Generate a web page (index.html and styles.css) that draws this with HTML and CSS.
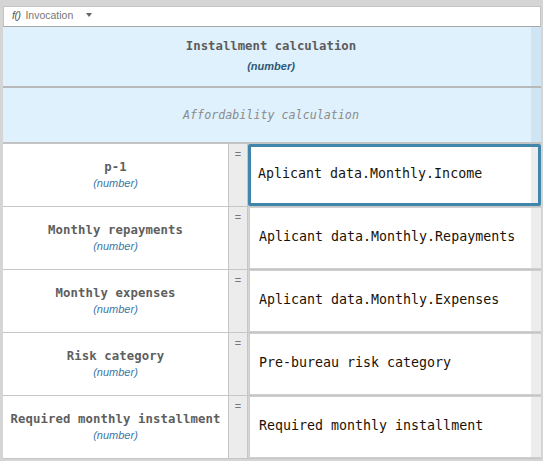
FILE: index.html
```html
<!DOCTYPE html>
<html>
<head>
<meta charset="utf-8">
<link rel="stylesheet" href="styles.css">
</head>
<body>
<div class="frame">
  <div class="topbar"><span class="fn">f()</span><span class="kind">Invocation</span><span class="caret"></span></div>
  <div class="table">
    <div class="hdr">
      <div class="hdr-main">
        <div class="title">Installment calculation</div>
        <div class="type type-hdr">(number)</div>
      </div>
      <div class="hstrip"></div>
    </div>
    <div class="hdr ctx">
      <div class="hdr-main"><div class="ctx-name">Affordability calculation</div></div>
      <div class="hstrip"></div>
    </div>
    <div class="row">
      <div class="label"><div class="name">p-1</div><div class="type">(number)</div></div>
      <div class="eq">=</div>
      <div class="cell selected"><span class="expr">Aplicant data.Monthly.Income</span><span class="gutter"></span></div>
    </div>
    <div class="row">
      <div class="label"><div class="name">Monthly repayments</div><div class="type">(number)</div></div>
      <div class="eq">=</div>
      <div class="cell"><span class="expr">Aplicant data.Monthly.Repayments</span><span class="gutter"></span></div>
    </div>
    <div class="row">
      <div class="label"><div class="name">Monthly expenses</div><div class="type">(number)</div></div>
      <div class="eq">=</div>
      <div class="cell"><span class="expr">Aplicant data.Monthly.Expenses</span><span class="gutter"></span></div>
    </div>
    <div class="row">
      <div class="label"><div class="name">Risk category</div><div class="type">(number)</div></div>
      <div class="eq">=</div>
      <div class="cell"><span class="expr">Pre-bureau risk category</span><span class="gutter"></span></div>
    </div>
    <div class="row">
      <div class="label"><div class="name">Required monthly installment</div><div class="type">(number)</div></div>
      <div class="eq">=</div>
      <div class="cell"><span class="expr">Required monthly installment</span><span class="gutter"></span></div>
    </div>
  </div>
</div>
</body>
</html>
```

FILE: styles.css
```css
html, body {
  margin: 0;
  padding: 0;
}
body {
  background: #d5d5d5;
  width: 543px;
  height: 461px;
  overflow: hidden;
}
.frame {
  margin: 6px 3px 0 3px;
  width: 538px;
}
.topbar {
  height: 21px;
  box-sizing: border-box;
  background: #fff;
  border: 1px solid #c4c4c4;
  border-bottom-color: #a8a8a8;
  display: flex;
  align-items: center;
  font-family: "Liberation Sans", Arial, sans-serif;
  font-size: 10.5px;
  color: #777;
  padding: 0 0 3px 8px;
}
.fn {
  font-style: italic;
  color: #555;
  letter-spacing: -0.5px;
  margin-right: 5px;
}
.caret {
  margin-left: 13px;
  width: 0;
  height: 0;
  border-left: 3.5px solid transparent;
  border-right: 3.5px solid transparent;
  border-top: 4px solid #666;
  margin-top: -1px;
}
.hdr {
  display: flex;
  background: #dff1fd;
  border-bottom: 2px solid #b9b9b9;
  height: 59px;
}
.hdr.ctx {
  height: 54px;
  border-bottom: 2px solid #c3c3c3;
}
.hdr-main {
  flex: 1;
  display: flex;
  flex-direction: column;
  align-items: center;
  justify-content: center;
  padding-left: 8px;
}
.hstrip {
  width: 10px;
  background: #cfe5f3;
}
.title {
  font-family: "DejaVu Sans Mono", monospace;
  font-weight: bold;
  font-size: 12.3px;
  color: #5c5c5c;
  margin-top: -3px;
}
.type {
  font-family: "Liberation Sans", Arial, sans-serif;
  font-style: italic;
  font-size: 11px;
  color: #3a77a6;
  margin-top: 3px;
}
.type-hdr {
  font-weight: bold;
  color: #2d5975;
  margin-top: 7px;
}
.ctx-name {
  font-family: "DejaVu Sans Mono", monospace;
  font-style: italic;
  font-size: 11.7px;
  color: #8a8a8a;
  margin-top: -1px;
}
.row {
  display: flex;
  height: 62px;
  border-bottom: 1px solid #c6c6c6;
}
.label {
  width: 225px;
  background: #fff;
  border-right: 1px solid #c6c6c6;
  display: flex;
  flex-direction: column;
  align-items: center;
  justify-content: center;
}
.name {
  font-family: "DejaVu Sans Mono", monospace;
  font-weight: bold;
  font-size: 12.3px;
  color: #5e5e5e;
  margin-top: -2px;
  letter-spacing: 0.1px;
}
.eq {
  width: 19px;
  background: #ececec;
  border-right: 1px solid #c6c6c6;
  font-family: "Liberation Sans", Arial, sans-serif;
  font-size: 11px;
  color: #777;
  text-align: center;
  padding-top: 4px;
  box-sizing: border-box;
}
.cell {
  flex: 1;
  display: flex;
  background: #fff;
  border: 1px solid #cfcfcf;
  border-right: none;
  margin-left: 1px;
}
.cell.selected {
  border: 3px solid #3f86aa;
  border-radius: 2px;
  margin-left: 0;
}
.expr {
  flex: 1;
  display: flex;
  align-items: center;
  padding: 0 0 4px 9px;
  font-family: "DejaVu Sans Mono", monospace;
  font-size: 13.3px;
  color: #1a1208;
}
.cell.selected .expr {
  padding-left: 7px;
}
.gutter {
  width: 10px;
  background: #ececec;
}
.cell.selected .gutter {
  width: 7px;
}
```
